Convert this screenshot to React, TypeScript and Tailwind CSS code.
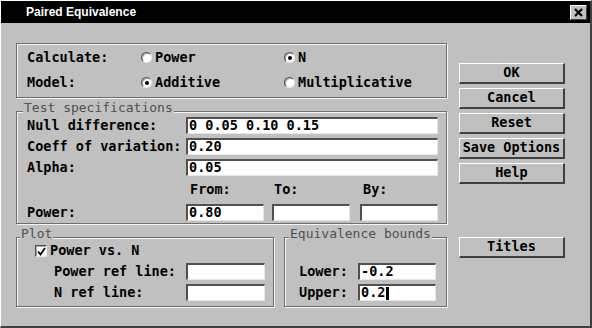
import React from 'react';

const Legend = ({ children, left = 'left-[6px]' }: { children: React.ReactNode; left?: string }) => (
  <span
    className={`absolute ${left} top-[-11px] px-[1px] bg-[#c0c0c0] text-[13px] leading-[14px] font-normal text-[#505050]`}
  >
    {children}
  </span>
);

const Box = ({ className, children }: { className: string; children: React.ReactNode }) => (
  <div
    className={`relative border border-[#6e6e6e] shadow-[inset_1px_1px_0_#f4f4f4,1px_1px_0_#f4f4f4] ${className}`}
  >
    {children}
  </div>
);

const Radio = ({ on }: { on?: boolean }) => (
  <span className="w-[11px] h-[11px] rounded-full bg-white border border-t-[#505050] border-l-[#505050] border-r-[#e8e8e8] border-b-[#e8e8e8] shadow-[inset_1px_1px_0_#a8a8a8] flex items-center justify-center shrink-0">
    {on && <span className="w-[4px] h-[4px] rounded-full bg-black" />}
  </span>
);

const Field = ({ w, value, cursor }: { w: string; value?: string; cursor?: boolean }) => (
  <div
    className={`${w} h-[17px] bg-white border-t-2 border-l-2 border-t-[#505050] border-l-[#505050] border-b border-r border-b-[#e6e6e6] border-r-[#e6e6e6] flex items-center pl-[1px] font-bold whitespace-pre`}
  >
    {value}
    {cursor && <span className="inline-block w-[3px] h-[13px] bg-black ml-[1px]" />}
  </div>
);

const Button = ({ label, className = '' }: { label: string; className?: string }) => (
  <div
    className={`h-[21px] flex items-center justify-center bg-[#c0c0c0] border-t border-l border-t-white border-l-white border-b-2 border-r-2 border-b-[#404040] border-r-[#404040] font-bold whitespace-pre ${className}`}
  >
    {label}
  </div>
);

export default function App() {
  return (
    <div className="w-[592px] h-[328px] bg-[#c0c0c0] border-t border-l border-t-white border-l-white border-r-2 border-b-2 border-r-[#404040] border-b-[#404040] flex flex-col text-black text-[13.5px] leading-none font-['DejaVu_Sans_Mono',monospace] overflow-hidden">
      {/* Title bar */}
      <div className="h-[22px] bg-black flex items-center justify-between pl-[25px] pr-[3px] shrink-0">
        <span className="text-white font-bold text-[12px] font-['Liberation_Sans',Arial,sans-serif]">
          Paired Equivalence
        </span>
        <span className="w-[17px] h-[15px] bg-[#c0c0c0] border-t border-l border-t-white border-l-white border-b border-r border-b-[#404040] border-r-[#404040] flex items-center justify-center">
          <svg width="9" height="9" viewBox="0 0 9 9">
            <path d="M1 1 L8 8 M8 1 L1 8" stroke="black" strokeWidth="2.2" />
          </svg>
        </span>
      </div>

      <div className="flex">
        {/* Left column */}
        <div className="ml-[15px] mt-[20px] w-[431px] flex flex-col">
          {/* Calculate / Model */}
          <Box className="h-[55px] pt-[1px] pl-[10px]">
            <div className="h-[25px] flex items-center font-bold">
              <span className="w-[114px]">Calculate:</span>
              <span className="w-[143px] flex items-center gap-[3px]">
                <Radio />
                Power
              </span>
              <span className="flex items-center gap-[3px]">
                <Radio on />N
              </span>
            </div>
            <div className="h-[25px] flex items-center font-bold">
              <span className="w-[114px]">Model:</span>
              <span className="w-[143px] flex items-center gap-[3px]">
                <Radio on />
                Additive
              </span>
              <span className="flex items-center gap-[3px]">
                <Radio />
                Multiplicative
              </span>
            </div>
          </Box>

          {/* Test specifications */}
          <Box className="mt-[13px] h-[113px] pt-[3px] pl-[10px]">
            <Legend>Test specifications</Legend>
            <div className="h-[21px] flex items-center font-bold">
              <span className="w-[159px] whitespace-pre">Null difference:</span>
              <Field w="w-[252px]" value="0 0.05 0.10 0.15" />
            </div>
            <div className="h-[21px] flex items-center font-bold">
              <span className="w-[159px] whitespace-pre">Coeff of variation:</span>
              <Field w="w-[252px]" value="0.20" />
            </div>
            <div className="h-[21px] flex items-center font-bold">
              <span className="w-[159px]">Alpha:</span>
              <Field w="w-[252px]" value="0.05" />
            </div>
            <div className="h-[24px] flex items-center font-bold">
              <span className="w-[159px]" />
              <span className="w-[86px] pl-[4px]">From:</span>
              <span className="w-[88px] pl-[2px]">To:</span>
              <span className="pl-[3px]">By:</span>
            </div>
            <div className="h-[21px] flex items-center font-bold">
              <span className="w-[159px]">Power:</span>
              <Field w="w-[78px]" value="0.80" />
              <span className="w-[8px]" />
              <Field w="w-[78px]" />
              <span className="w-[10px]" />
              <Field w="w-[78px]" />
            </div>
          </Box>

          {/* Plot + Equivalence bounds */}
          <div className="mt-[13px] flex gap-[10px]">
            <Box className="w-[258px] h-[70px] pt-[3px]">
              <Legend left="left-[3px]">Plot</Legend>
              <div className="h-[20px] flex items-center pl-[18px] gap-[3px] font-bold">
                <span className="w-[12px] h-[12px] bg-white border border-t-[#505050] border-l-[#505050] border-r-[#e8e8e8] border-b-[#e8e8e8] shadow-[inset_1px_1px_0_#a8a8a8] flex items-center justify-center">
                  <svg width="9" height="9" viewBox="0 0 9 9">
                    <path d="M1 4.5 L3.5 7.5 L8 1" stroke="black" strokeWidth="1.8" fill="none" />
                  </svg>
                </span>
                <span className="whitespace-pre">Power vs. N</span>
              </div>
              <div className="h-[21px] flex items-center pl-[37px] font-bold">
                <span className="w-[132px] whitespace-pre">Power ref line:</span>
                <Field w="w-[79px]" />
              </div>
              <div className="h-[21px] flex items-center pl-[37px] font-bold">
                <span className="w-[132px] whitespace-pre">N ref line:</span>
                <Field w="w-[79px]" />
              </div>
            </Box>
            <Box className="w-[163px] h-[70px] pt-[3px]">
              <Legend left="left-[4px]">Equivalence bounds</Legend>
              <div className="h-[20px]" />
              <div className="h-[21px] flex items-center pl-[14px] font-bold">
                <span className="w-[59px]">Lower:</span>
                <Field w="w-[78px]" value="-0.2" />
              </div>
              <div className="h-[21px] flex items-center pl-[14px] font-bold">
                <span className="w-[59px]">Upper:</span>
                <Field w="w-[78px]" value="0.2" cursor />
              </div>
            </Box>
          </div>
        </div>

        {/* Buttons */}
        <div className="ml-[12px] mt-[40px] w-[106px] flex flex-col gap-[4px]">
          <Button label="OK" />
          <Button label="Cancel" />
          <Button label="Reset" />
          <Button label="Save Options" />
          <Button label="Help" />
          <Button label="Titles" className="mt-[49px]" />
        </div>
      </div>
    </div>
  );
}
